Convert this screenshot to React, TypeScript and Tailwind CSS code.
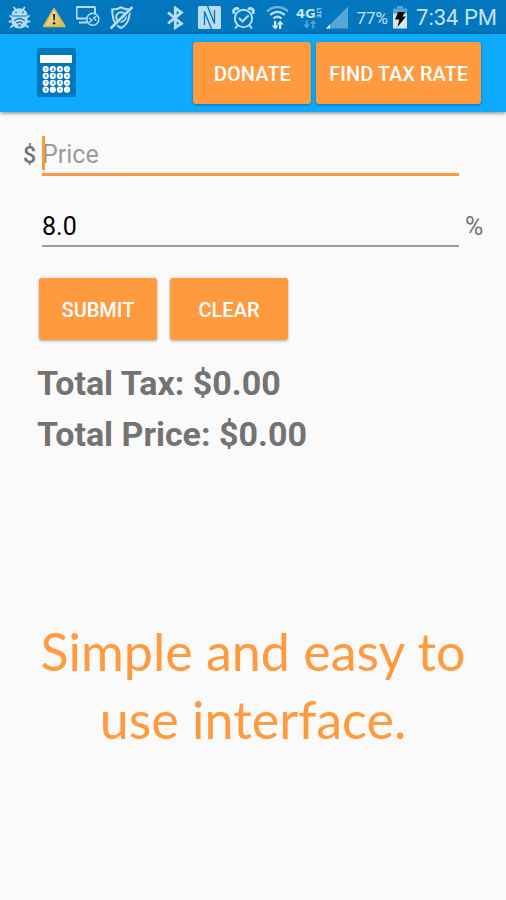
import { useState, type ButtonHTMLAttributes } from "react";

const KEYS = ["7", "8", "9", "/", "4", "5", "6", "x", "1", "2", "3", "=", "0", ".", "+", "-"];

function BugIcon() {
  return (
    <svg className="h-6 w-6" viewBox="0 0 24 24" fill="none" aria-hidden="true">
      <path
        d="M6 1.500l2 2.500M16.500 1.500l-2 2.500M4.500 11.500L2 10M18.500 11.500l2.500-1.500M4 15.500H1.500M19 15.500h2.500M5 19.500l-2 1.500M18 19.500l2 1.500"
        stroke="#b9dcf0"
        strokeWidth="1.800"
        strokeLinecap="round"
      />
      <path d="M3.500 9.500C3.500 5 7 2.200 11.300 2.200S19.500 5 19.500 9.500z" fill="#b9dcf0" />
      <path d="M3.500 10.500h16V15c0 4.500-3.500 7.500-8 7.500s-8-3-8-7.500z" fill="#b9dcf0" />
      <circle cx="8" cy="6.300" r="0.900" fill="#0277bd" />
      <circle cx="15" cy="6.300" r="0.900" fill="#0277bd" />
      <path d="M6.300 14.800c3.300-3 7.200-3 10.500 0M8.500 17.300c2-1.700 4.200-1.700 6.200 0" stroke="#0277bd" strokeWidth="1.400" />
      <circle cx="11.500" cy="19.500" r="1.200" fill="#0277bd" />
    </svg>
  );
}

function WarningIcon() {
  return (
    <svg className="h-6 w-6" viewBox="0 0 24 24" aria-hidden="true">
      <defs>
        <linearGradient id="warn" x1="0" y1="0" x2="1" y2="1">
          <stop offset="0" stopColor="#f5ecc0" />
          <stop offset="1" stopColor="#d8b64c" />
        </linearGradient>
      </defs>
      <path d="M12 2.500L23 20.500H1.500z" fill="url(#warn)" stroke="#d9b64a" strokeWidth="1.500" strokeLinejoin="round" />
      <path d="M11 8h2.200l-.5 6.500h-1.200z" fill="#222" />
      <circle cx="12.100" cy="17.200" r="1.200" fill="#222" />
    </svg>
  );
}

function RemoteIcon() {
  return (
    <svg className="h-6 w-6" viewBox="0 0 24 24" fill="none" stroke="#b9dcf0" aria-hidden="true">
      <path d="M10.500 12.500H1.500c-.600 0-1-.400-1-1V2c0-.600.400-1 1-1h16.500c.600 0 1 .400 1 1v5" strokeWidth="2" />
      <path d="M3 16.500h8" strokeWidth="2" />
      <circle cx="16.800" cy="13.300" r="6" strokeWidth="1.500" />
      <path d="M13.300 12l2.500 2.300-2.500 2.300M20.200 10l-2.500 2.200 2.500 2.300" strokeWidth="1.400" />
    </svg>
  );
}

function ShieldOffIcon() {
  return (
    <svg className="h-6 w-6" viewBox="0 0 24 24" fill="none" stroke="#b9dcf0" aria-hidden="true">
      <path d="M11 1.300c2.500 1.600 5 2.200 8.800 2.200 0 8-1.300 14.500-8.800 18.500-7.500-4-8.800-10.500-8.800-18.500C6 3.500 8.500 2.900 11 1.300z" strokeWidth="2" />
      <circle cx="11" cy="11" r="4.800" strokeWidth="2" />
      <path d="M2 22.800L24 1.300" stroke="#0277bd" strokeWidth="2" />
      <path d="M.500 22.500L22.500 1" strokeWidth="2.600" />
    </svg>
  );
}

function BluetoothIcon() {
  return (
    <svg className="h-6 w-6" viewBox="0 0 24 24" fill="none" stroke="#b9dcf0" strokeWidth="2.800" aria-hidden="true">
      <path d="M3 6.500L16.500 17.500l-6.200 4V2l6.200 4.500L3 17.500" />
    </svg>
  );
}

function NfcIcon() {
  return (
    <svg className="h-6 w-6" viewBox="0 0 24 24" aria-hidden="true">
      <rect x="0" y="0" width="23" height="23" rx="1.500" fill="#b9dcf0" />
      <path d="M6.500 19V5.500L13.500 23M16.500 4v13.500L9.500 0" fill="none" stroke="#0277bd" strokeWidth="1.300" />
    </svg>
  );
}

function AlarmIcon() {
  return (
    <svg className="h-6 w-6" viewBox="0 0 24 24" fill="none" stroke="#b9dcf0" strokeLinecap="round" aria-hidden="true">
      <circle cx="12.500" cy="12.500" r="8.700" strokeWidth="2" />
      <path d="M8.500 12.500l3 3 5.500-5.500" strokeWidth="2" />
      <path d="M2.800 6.500a3 3 0 014-3.800M22.200 6.500a3 3 0 00-4-3.800" strokeWidth="3" />
      <path d="M6.500 19.500l-2 2.500M18.500 19.500l2 2.500" strokeWidth="2" />
    </svg>
  );
}

function WifiIcon() {
  return (
    <svg className="h-6 w-6" viewBox="0 0 24 24" fill="none" aria-hidden="true">
      <g strokeWidth="2.400">
        <path d="M3 5.500c6-6 15-6 21 0" stroke="#6db3dd" />
        <path d="M6.300 9c4.200-4.200 10.200-4.200 14.400 0" stroke="#b9dcf0" />
        <path d="M9.500 12.500c2.500-2.300 5.500-2.300 8 0" stroke="#b9dcf0" />
      </g>
      <path d="M10 15v4.500H7.700l3.500 4 3.500-4h-2.500V15zM15 23v-4.500h-2.300l3.500-4 3.500 4h-2.500V23z" fill="#d6ecf8" />
    </svg>
  );
}

function NetworkIcon() {
  return (
    <svg className="h-6 w-7" viewBox="0 0 28 24" aria-label="4G LTE">
      <text x="0" y="12" fontSize="13" fontWeight="700" fontFamily="DejaVu Sans, sans-serif" fill="#c5e2f3">
        4G
      </text>
      <text transform="translate(21 2) rotate(90)" x="0" y="0" fontSize="6" fontWeight="700" fontFamily="Roboto, sans-serif" fill="#c5e2f3">
        LTE
      </text>
      <path d="M9.800 14v4.500H7.500l3.200 4 3.200-4h-2.300V14zM16.300 22.500V18H14l3.200-4 3.200 4h-2.300v4.500z" fill="#55a6d6" />
    </svg>
  );
}

function SignalIcon() {
  return (
    <svg className="h-6 w-6" viewBox="0 0 24 24" aria-hidden="true">
      <path d="M24 .5v22H2z" fill="#55a6d6" />
      <path d="M6 18.500v4H2z" fill="#e3f1f9" />
    </svg>
  );
}

function BatteryIcon() {
  return (
    <svg className="h-6 w-4" viewBox="0 0 16 24" aria-hidden="true">
      <path d="M5 0h6v2.500H5z" fill="#55a6d6" />
      <path d="M1 2.500h14v5H1z" fill="#55a6d6" />
      <path d="M1 7.500h14v15H1z" fill="#d3e8f3" />
      <path d="M6 6h7l-2.500 4.500H14L5.500 21l1.800-7.500H3z" fill="#0a0a0a" />
    </svg>
  );
}

function CalculatorLogo() {
  return (
    <svg className="h-[50px] w-10" viewBox="0 0 40 50" role="img" aria-label="Tax calculator">
      <rect x="0" y="0" width="39" height="49" rx="2.500" fill="#0277bd" />
      <rect x="3" y="7" width="32" height="8" fill="#fff" />
      {KEYS.map((key, i) => {
        const cx = 8.7 + (i % 4) * 7.1;
        const cy = 21 + Math.floor(i / 4) * 6.9;
        return (
          <g key={key}>
            <circle cx={cx} cy={cy} r="3.100" fill="#fff" />
            <text x={cx} y={cy + 1.5} textAnchor="middle" fontSize="4" fontWeight="700" fontFamily="Roboto, sans-serif" fill="#0277bd">
              {key}
            </text>
          </g>
        );
      })}
    </svg>
  );
}

function StatusBar() {
  return (
    <div className="flex h-[34px] items-center justify-between bg-[#0277bd] pl-2 pr-[9px] pt-[2px] text-[#c5e2f3]">
      <div className="flex gap-[10px]">
        <BugIcon />
        <WarningIcon />
        <RemoteIcon />
        <ShieldOffIcon />
      </div>
      <div className="flex items-center gap-2">
        <div className="flex gap-[9px]">
          <BluetoothIcon />
          <NfcIcon />
          <AlarmIcon />
          <WifiIcon />
        </div>
        <div className="flex items-center">
          <NetworkIcon />
          <SignalIcon />
        </div>
        <div className="flex items-center gap-1">
          <span className="text-[17px] leading-6">77%</span>
          <BatteryIcon />
        </div>
        <span className="text-[22px] leading-6">7:34 PM</span>
      </div>
    </div>
  );
}

function RaisedButton({ className = "", ...props }: ButtonHTMLAttributes<HTMLButtonElement>) {
  return (
    <button
      className={`h-[62px] min-w-[118px] rounded-[3px] bg-[#ff9a3e] px-[13px] pt-px text-xl font-medium text-white shadow-[0_1px_3px_rgba(0,0,0,0.35)] ${className}`}
      {...props}
    />
  );
}

export default function App() {
  const [price, setPrice] = useState("");
  const [rate, setRate] = useState("8.0");
  const [total, setTotal] = useState({ tax: 0, price: 0 });

  const submit = () => {
    const base = Number(price) || 0;
    const tax = (base * (Number(rate) || 0)) / 100;
    setTotal({ tax, price: base + tax });
  };

  const clear = () => {
    setPrice("");
    setTotal({ tax: 0, price: 0 });
  };

  return (
    <div className="min-h-screen bg-[#fafafa] font-[Roboto,sans-serif]">
      <StatusBar />
      <header className="flex h-[78px] items-center justify-between bg-[#0eaaff] pl-[37px] pr-[25px] shadow-[0_1px_4px_rgba(0,0,0,0.5)]">
        <CalculatorLogo />
        <div className="flex gap-[5px]">
          <RaisedButton>DONATE</RaisedButton>
          <RaisedButton>FIND TAX RATE</RaisedButton>
        </div>
      </header>

      <main className="pt-6">
        <div className="flex items-center pl-[23px] pr-[47px] text-[25px] text-[#737373]">
          <label htmlFor="price" className="w-[19px] shrink-0 text-[23px] font-medium">
            $
          </label>
          <div className="relative grow">
            <input
              id="price"
              value={price}
              onChange={(e) => setPrice(e.target.value)}
              placeholder="Price"
              inputMode="decimal"
              className="block h-10 w-full border-b-[3px] border-[#ff9a3e] bg-transparent text-black caret-[#ff9a3e] outline-none placeholder:text-[#9c9c9c]"
            />
            {price === "" && <span className="absolute left-0 top-0 h-[34px] w-[3px] bg-[#ff9a2e]" />}
          </div>
        </div>

        <div className="mt-[31px] flex items-center pl-[42px] pr-[22px] text-[25px] text-[#737373]">
          <input
            id="rate"
            value={rate}
            onChange={(e) => setRate(e.target.value)}
            inputMode="decimal"
            className="block h-10 min-w-0 grow border-b-2 border-[#9c9c9c] bg-transparent pt-px text-black outline-none"
          />
          <label htmlFor="rate" className="w-[25px] shrink-0 pl-[6px]">
            %
          </label>
        </div>

        <div className="mt-[31px] flex gap-[13px] pl-[39px]">
          <RaisedButton onClick={submit}>SUBMIT</RaisedButton>
          <RaisedButton onClick={clear}>CLEAR</RaisedButton>
        </div>

        <div className="mt-[18px] px-[37px] text-[34px] font-bold leading-[51px] text-[#737373]">
          <p>Total Tax: ${total.tax.toFixed(2)}</p>
          <p>Total Price: ${total.price.toFixed(2)}</p>
        </div>

        <p className="mt-[157px] px-4 text-center font-[Lato,sans-serif] text-[52px] leading-[68px] text-[#ff9a3e]">
          Simple and easy to
          <br />
          use interface.
        </p>
      </main>
    </div>
  );
}
